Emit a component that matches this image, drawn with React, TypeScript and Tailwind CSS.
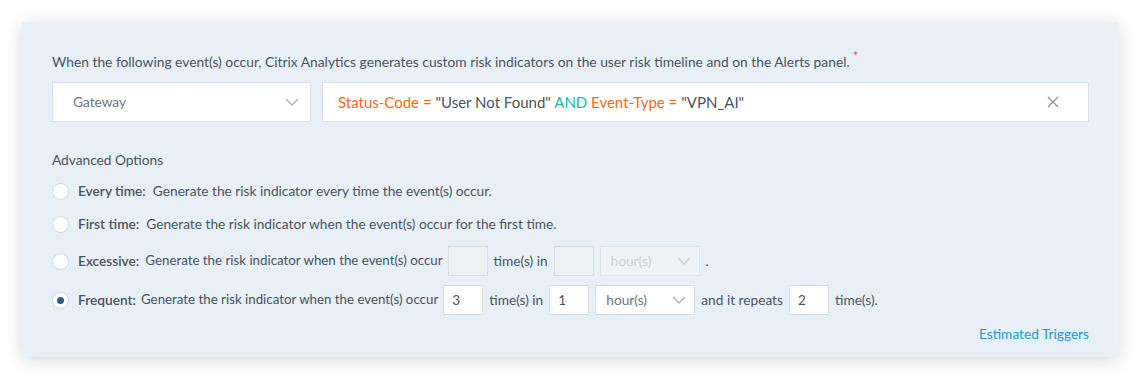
import React from "react";

const Chevron = ({ color = "#9aa3ad" }: { color?: string }) => (
  <svg width="14" height="8" viewBox="0 0 14 8" fill="none">
    <path d="M1 1l6 6 6-6" stroke={color} strokeWidth="1.3" />
  </svg>
);

const Radio = ({ checked = false }: { checked?: boolean }) => (
  <span className="w-[17px] h-[17px] rounded-full bg-white border border-[#cfd6dd] flex items-center justify-center shrink-0">
    {checked && <span className="w-[7px] h-[7px] rounded-full bg-[#2d5b8a]" />}
  </span>
);

const NumBox = ({ value, disabled = false }: { value?: string; disabled?: boolean }) => (
  <span
    className={`w-[40px] h-[30px] border flex items-center pl-[8px] text-[13.5px] text-[#4b5563] ${
      disabled ? "bg-[#eef1f4] border-[#d7dde3]" : "bg-white border-[#d7dde3]"
    }`}
  >
    {value}
  </span>
);

const UnitSelect = ({ disabled = false }: { disabled?: boolean }) => (
  <span
    className={`w-[100px] h-[30px] border flex items-center justify-between pl-[10px] pr-[8px] text-[13.7px] ${
      disabled ? "bg-[#eff3f7] border-[#dfe5ea] text-[#c9d0d7]" : "bg-white border-[#d7dde3] text-[#6b7580]"
    }`}
  >
    hour(s)
    <Chevron color={disabled ? "#c9d0d7" : "#a7afb8"} />
  </span>
);

export default function App() {
  return (
    <div
      className="w-[1141px] h-[380px] bg-white pt-[22px] pl-[22px]"
      style={{ fontFamily: "Lato, 'Noto Sans', sans-serif" }}
    >
      <div className="w-[1097px] h-[335px] bg-[#e7eff7] shadow-[0_3px_16px_rgba(0,0,0,0.16)] pt-[31px] px-[30px] text-[#4a5361]">
        <div className="text-[13.8px] leading-[18px] flex">
          <span>
            When the following event(s) occur, Citrix Analytics generates custom risk indicators on the user risk timeline and on the Alerts panel.
          </span>
          <span className="text-[#ef5b4b] text-[14px] ml-[3px] -mt-[6px]">*</span>
        </div>
        <div className="flex gap-[11px] mt-[11px]">
          <div className="w-[259px] h-[40px] bg-white border border-[#d9dfe5] flex items-center justify-between pl-[20px] pr-[11px] text-[13.7px] text-[#6b7580]">
            Gateway
            <Chevron color="#a7afb8" />
          </div>
          <div className="w-[767px] h-[40px] bg-white border border-[#d9dfe5] flex items-center justify-between pl-[15px] pr-[29px] text-[15px] text-[#4a5361]">
            <span>
              <span className="text-[#ef6a25]">Status-Code = </span>
              "User Not Found"{" "}
              <span className="text-[#22bba0]">AND</span>{" "}
              <span className="text-[#ef6a25]">Event-Type = </span>
              "VPN_AI"
            </span>
            <svg width="12" height="12" viewBox="0 0 12 12">
              <path d="M1 1l10 10M11 1L1 11" stroke="#8a939c" strokeWidth="1.3" />
            </svg>
          </div>
        </div>
        <div className="text-[13.7px] mt-[29px] leading-[18px]">Advanced Options</div>
        <div className="flex flex-col text-[13.7px] mt-[13px]">
          <div className="flex items-center gap-[9px] h-[18px]">
            <Radio />
            <span>
              <b className="font-semibold">Every time:</b>&nbsp; Generate the risk indicator every time the event(s) occur.
            </span>
          </div>
          <div className="flex items-center gap-[9px] h-[18px] mt-[15px]">
            <Radio />
            <span>
              <b className="font-semibold">First time:</b>&nbsp; Generate the risk indicator when the event(s) occur for the first time.
            </span>
          </div>
          <div className="flex items-center gap-[9px] h-[30px] mt-[13px]">
            <Radio />
            <span className="text-[13.3px] flex gap-[6px]">
              <b className="font-semibold text-[13.7px]">Excessive:</b>
              <span>Generate the risk indicator when the event(s) occur</span>
            </span>
            <span className="flex items-center gap-[6px] -ml-[4px]">
              <NumBox disabled />
              <span>time(s) in</span>
              <NumBox disabled />
              <UnitSelect disabled />
              <span>.</span>
            </span>
          </div>
          <div className="flex items-center gap-[9px] h-[30px] mt-[9px]">
            <Radio checked />
            <span className="text-[13.3px] flex gap-[5px]">
              <b className="font-semibold text-[13.7px]">Frequent:</b>
              <span>Generate the risk indicator when the event(s) occur</span>
            </span>
            <span className="flex items-center gap-[6px] -ml-[4px]">
              <NumBox value="3" />
              <span>time(s) in</span>
              <NumBox value="1" />
              <UnitSelect />
              <span>and it repeats</span>
              <NumBox value="2" />
              <span>time(s).</span>
            </span>
          </div>
        </div>
        <div className="flex justify-end mt-[9px]">
          <span className="text-[13.7px] text-[#1c98d8]">Estimated Triggers</span>
        </div>
      </div>
    </div>
  );
}
